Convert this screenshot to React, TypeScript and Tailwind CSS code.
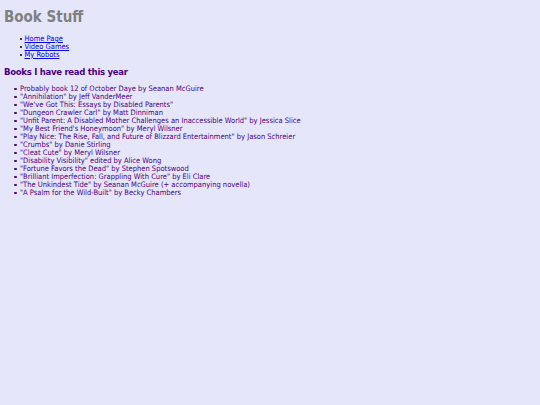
const books = [
  "Probably book 12 of October Daye by Seanan McGuire",
  "\"Annihilation\" by Jeff VanderMeer",
  "\"We've Got This: Essays by Disabled Parents\"",
  "\"Dungeon Crawler Carl\" by Matt Dinniman",
  "\"Unfit Parent: A Disabled Mother Challenges an Inaccessible World\" by Jessica Slice",
  "\"My Best Friend's Honeymoon\" by Meryl Wilsner",
  "\"Play Nice: The Rise, Fall, and Future of Blizzard Entertainment\" by Jason Schreier",
  "\"Crumbs\" by Danie Stirling",
  "\"Cleat Cute\" by Meryl Wilsner",
  "\"Disability Visibility\" edited by Alice Wong",
  "\"Fortune Favors the Dead\" by Stephen Spotswood",
  "\"Brilliant Imperfection: Grappling With Cure\" by Eli Clare",
  "\"The Unkindest Tide\" by Seanan McGuire (+ accompanying novella)",
  "\"A Psalm for the Wild-Built\" by Becky Chambers",
];

const nav = ["Home Page", "Video Games", "My Robots"];

export default function App() {
  return (
    <div className="min-h-[405px] w-[540px] bg-[#e6e6fa] px-1 pt-[7px] pb-[6px] font-['DejaVu_Sans_Condensed','DejaVu_Sans',Verdana,sans-serif] [font-stretch:condensed]">
      <h1 className="text-[15px] leading-[20px] font-bold text-[#808080]">Book Stuff</h1>
      <ul className="mt-[8px] pl-[15.5px] text-[7.5px] leading-[8px]">
        {nav.map((n) => (
          <li key={n} className="flex items-center gap-[2.5px]">
            <span className="h-[2.5px] w-[2.5px] shrink-0 rounded-full bg-black" />
            <a href="#" className="text-[#0000ee] underline">
              {n}
            </a>
          </li>
        ))}
      </ul>
      <h2 className="mt-[7px] text-[9.5px] leading-[12px] font-bold tracking-[-0.3px] text-[#4b0082]">
        Books I have read this year
      </h2>
      <ul className="mt-[7px] pl-[10px] text-[7.5px] leading-[8px] text-[#4b0082]">
        {books.map((b) => (
          <li key={b} className="flex items-center gap-[3.5px]">
            <span className="h-[2.5px] w-[2.5px] shrink-0 rounded-full bg-current" />
            <span>{b}</span>
          </li>
        ))}
      </ul>
    </div>
  );
}
